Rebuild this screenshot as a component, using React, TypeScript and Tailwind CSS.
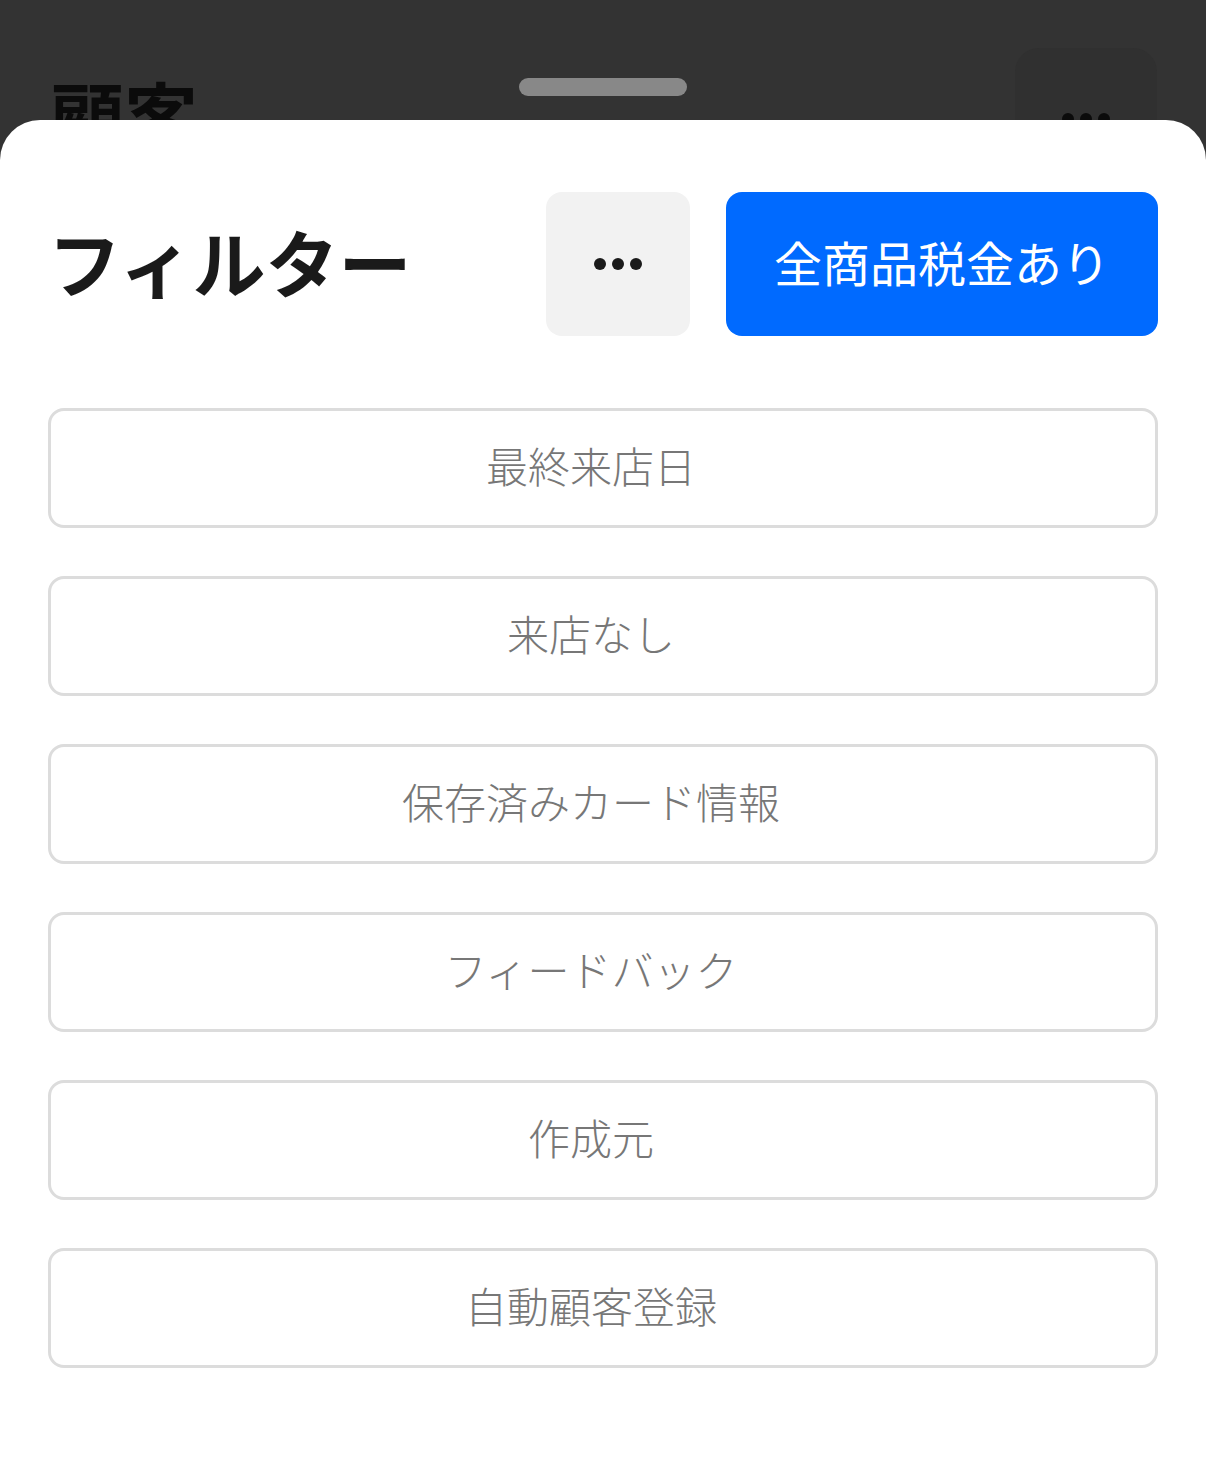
import React from "react";

const rows = ["最終来店日", "来店なし", "保存済みカード情報", "フィードバック", "作成元", "自動顧客登録"];

function Dots({ color }: { color: string }) {
  return (
    <div className="flex items-center gap-[6px]">
      <span className={`block w-[12px] h-[12px] rounded-full ${color}`} />
      <span className={`block w-[12px] h-[12px] rounded-full ${color}`} />
      <span className={`block w-[12px] h-[12px] rounded-full ${color}`} />
    </div>
  );
}

export default function App() {
  return (
    <div
      className="relative w-[1206px] h-[1473px] bg-[#333333] overflow-hidden flex flex-col"
      style={{ fontFamily: '"Noto Sans CJK JP", "Noto Sans", sans-serif' }}
    >
      <div className="relative h-[120px] shrink-0">
        <div className="absolute left-[50px] top-[76px] text-[74px] leading-none font-bold text-[#0b0b0b]">顧客</div>
        <div className="absolute left-[1015px] top-[48px] w-[142px] h-[142px] rounded-[24px] bg-[#303030] flex items-center justify-center">
          <Dots color="bg-[#0b0b0b]" />
        </div>
        <div className="absolute left-[519px] top-[78px] w-[168px] h-[18px] rounded-full bg-[#888888]" />
      </div>
      <div className="relative flex-1 bg-white rounded-t-[40px] px-[48px] pt-[72px]">
        <div className="flex items-center h-[144px]">
          <div className="flex-1 text-[73px] leading-none font-bold text-[#1a1a1a] pb-[8px]">フィルター</div>
          <div className="w-[144px] h-[144px] rounded-[16px] bg-[#f2f2f2] flex items-center justify-center">
            <Dots color="bg-[#1a1a1a]" />
          </div>
          <div className="ml-[36px] w-[432px] h-[144px] rounded-[16px] bg-[#006aff] flex items-center justify-center pb-[6px] text-white text-[48px] leading-none">
            全商品税金あり
          </div>
        </div>
        <div className="mt-[72px] flex flex-col gap-[48px]">
          {rows.map((r) => (
            <div
              key={r}
              className="h-[120px] border-[3px] border-[#dcdcdc] rounded-[16px] flex items-center justify-center pr-[24px] pb-[6px] text-[42px] leading-none font-light text-[#777777]"
            >
              {r}
            </div>
          ))}
        </div>
      </div>
    </div>
  );
}
